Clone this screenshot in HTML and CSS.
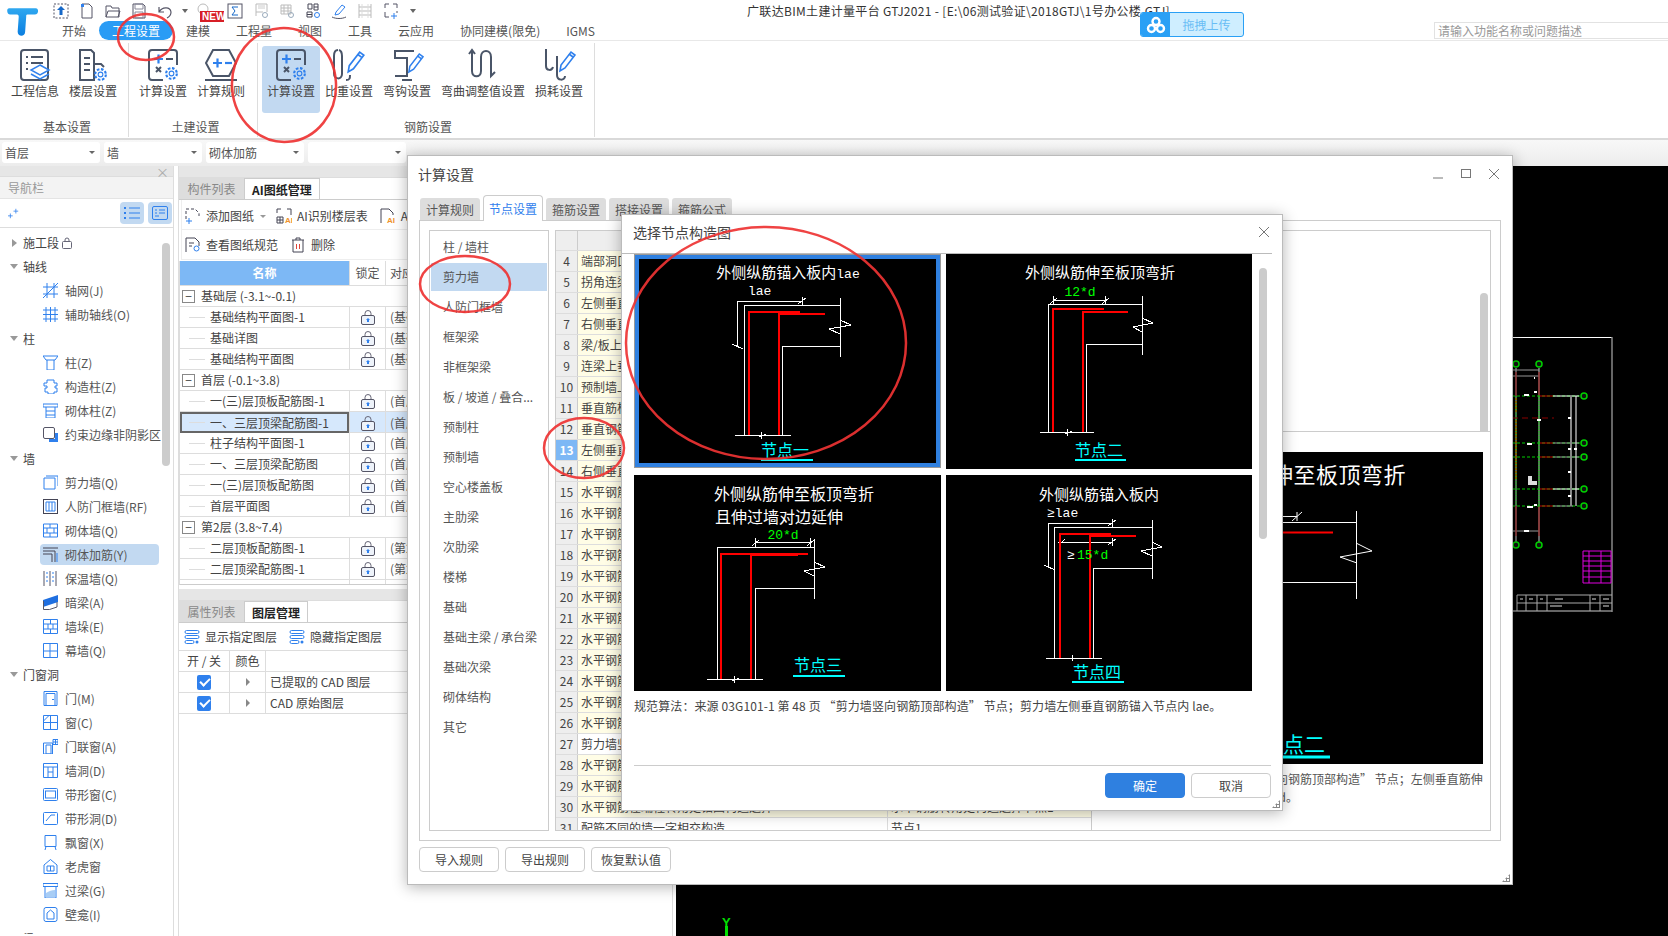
FILE: index.html
```html
<!DOCTYPE html>
<html lang="zh-CN">
<head>
    <meta charset="UTF-8">
    <title>广联达BIM土建计量平台 GTJ2021</title>
    <link rel="stylesheet" href="styles.css">
</head>
<body>
    <!-- shared icon pieces -->
    <svg class="defs" width="0" height="0">
        <symbol id="gear" viewBox="0 0 14 14"><circle cx="7" cy="7" r="2.2" fill="none" stroke="#2f80ed"/><circle cx="7" cy="7" r="5" fill="none" stroke="#2f80ed" stroke-width="2" stroke-dasharray="2.4 1.5"/></symbol>
        <symbol id="pencil" viewBox="0 0 18 24"><path d="M2 22l1-6L13 3l4 3L7 19z" fill="#fff" stroke="#2f80ed" stroke-width="1.6"/><path d="M11 5l4 3" stroke="#2f80ed" stroke-width="1.6"/></symbol>
        <symbol id="lock" viewBox="0 0 16 16"><path d="M5 7V4.500a3 3 0 0 1 6 0V7" fill="none" stroke="#667"/><rect x="1.500" y="6.500" width="13" height="9" rx="1.500" fill="#eef3fa" stroke="#556"/><path d="M8 9l2 2H9v2H7v-2H6z" fill="#2f80ed"/></symbol>
        <symbol id="layers" viewBox="0 0 16 16"><g fill="none" stroke="#2f80ed"><rect x="1" y="1.500" width="14" height="3" rx="1.500"/><rect x="1" y="6.500" width="14" height="3" rx="1.500"/><rect x="1" y="11.500" width="9" height="3" rx="1.500"/></g><circle cx="13" cy="13" r="1.500" fill="#2f80ed"/></symbol>
    </svg>

    <header class="top">
        <div class="top-row">
            <div class="quick">
                <svg class="logo" viewBox="0 0 30 28"><defs><linearGradient id="lg" x1="0" x2="0" y1="0" y2="1"><stop offset="0" stop-color="#2fa8f0"/><stop offset="1" stop-color="#0b7fe0"/></linearGradient></defs><path d="M2 2h25c3 0 3 6-1 6h-7c-1 0-1 1-1 2l-1 14c0 5-7 5-7 0l1-14c0-2-1-2-3-2H3C0 8-1 2 2 2z" fill="url(#lg)"/></svg>
                <svg class="qi" viewBox="0 0 16 16"><rect x="1" y="1" width="14" height="14" fill="none" stroke="#556" stroke-dasharray="2 1.500"/><path d="M8 3l4 4H9.500v5h-3V7H4z" fill="#1668c8"/></svg>
                <svg class="qi" viewBox="0 0 16 16"><path d="M3 1h7l3 3v11H3z" fill="none" stroke="#556"/><path d="M2 1h3v3H2z" fill="#2f80ed"/></svg>
                <svg class="qi" viewBox="0 0 16 16"><path d="M1 14V3h5l1 2h7v9z" fill="none" stroke="#556"/><path d="M1 14l2-6h12l-2 6" fill="none" stroke="#556"/></svg>
                <svg class="qi" viewBox="0 0 16 16"><path d="M2 1h10l2 2v12H2z" fill="none" stroke="#556"/><path d="M4 1h8v5H4zM4 9h8v6H4z" fill="none" stroke="#889"/></svg>
                <svg class="qi" viewBox="0 0 16 16"><path d="M2 4v5h5M2 9c3-5 11-6 12 0 0 3-2 5-4 6" fill="none" stroke="#556" stroke-width="1.200"/></svg>
                <span class="qcaret"></span>
                <span class="new-wrap"><svg class="qi ghost" viewBox="0 0 16 16"><circle cx="7" cy="6" r="5" fill="none" stroke="#bbb"/></svg><b class="new">NEW</b></span>
                <svg class="qi" viewBox="0 0 16 16"><rect x="1" y="1" width="14" height="14" fill="none" stroke="#556"/><path d="M11 4H5l3 4-3 4h6" fill="none" stroke="#1668c8"/></svg>
                <svg class="qi" viewBox="0 0 16 16"><path d="M3 9V1h11v8M3 13V9h7" fill="none" stroke="#bbb"/><path d="M5 3h7M5 5h7" stroke="#ccc"/><circle cx="12" cy="12" r="2.500" fill="none" stroke="#9ab"/></svg>
                <svg class="qi" viewBox="0 0 16 16"><path d="M2 2h10v9H2zM2 5h10M2 8h10M5 2v9M9 2v9" fill="none" stroke="#bbb"/><circle cx="12" cy="12" r="2.500" fill="none" stroke="#9ab"/></svg>
                <svg class="qi" viewBox="0 0 16 16"><path d="M3 1h4v5H3zM9 1h4v6H9zM9 4h4M2 9h5v5H2zM2 11.500h5" fill="none" stroke="#445"/><circle cx="12" cy="12" r="2.500" fill="none" stroke="#2f80ed"/></svg>
                <svg class="qi" viewBox="0 0 16 16"><path d="M1 14c4 2 10 2 14 0" fill="none" stroke="#556"/><path d="M4 12l1-3 6-7 3 2-6 7z" fill="none" stroke="#2f80ed"/></svg>
                <svg class="qi" viewBox="0 0 16 16"><path d="M2 1v14M14 1v14M2 4h12M2 8h12M2 12h12" fill="none" stroke="#bbb"/><path d="M5 1v14M11 1v14" stroke="#ddd"/></svg>
                <svg class="qi" viewBox="0 0 16 16"><path d="M2 5V1h4M10 1h4v4M14 8v2M2 9v5h4" fill="none" stroke="#556"/><path d="M11 10v6M8 13h6" stroke="#2f80ed" fill="none"/></svg>
                <span class="qmore"></span>
            </div>
            <div class="win-title">广联达BIM土建计量平台 GTJ2021 - [E:\06测试验证\2018GTJ\1号办公楼.GTJ]</div>
        </div>
        <nav class="tabs">
            <span class="tab">开始</span>
            <span class="tab on">工程设置</span>
            <span class="tab">建模</span>
            <span class="tab">工程量</span>
            <span class="tab">视图</span>
            <span class="tab">工具</span>
            <span class="tab">云应用</span>
            <span class="tab">协同建模(限免)</span>
            <span class="tab">IGMS</span>
            <div class="search">请输入功能名称或问题描述</div>
        </nav>
        <div class="upload">
            <span class="upload-ic"><svg viewBox="0 0 20 18" width="20" height="18"><g fill="none" stroke="#fff" stroke-width="2.400"><circle cx="10" cy="5.500" r="3.500"/><circle cx="5.500" cy="12.500" r="3.500"/><circle cx="14.500" cy="12.500" r="3.500"/></g></svg></span>
            <span class="upload-tx">拖拽上传</span>
        </div>
    </header>

    <section class="ribbon">
        <div class="rgroup g1">
            <div class="ritems">
                <div class="ritem"><svg class="ric" viewBox="0 0 34 34"><rect x="3" y="2" width="27" height="30" rx="3" fill="none" stroke="#4a5568" stroke-width="2"/><path d="M8 9h2M13 9h12M8 15h2M13 15h12M8 21h2" stroke="#4a5568" stroke-width="2"/><path d="M22 17l9 5-9 5-9-5z" fill="#fff" stroke="#2f80ed" stroke-width="1.500"/><path d="M13 26l9 5 9-5" fill="none" stroke="#2f80ed" stroke-width="1.500"/></svg><span>工程信息</span></div>
                <div class="ritem"><svg class="ric" viewBox="0 0 34 34"><path d="M4 32V2h11l3 3v27z" fill="none" stroke="#4a5568" stroke-width="2"/><path d="M8 10h6M8 16h6M8 22h6M18 16h7l3 3" fill="none" stroke="#4a5568" stroke-width="2"/><use href="#gear" x="17" y="19" width="15" height="15"/></svg><span>楼层设置</span></div>
            </div>
            <div class="rlabel">基本设置</div>
        </div>
        <div class="rgroup g2">
            <div class="ritems">
                <div class="ritem"><svg class="ric" viewBox="0 0 34 34"><rect x="3" y="2" width="28" height="30" rx="3" fill="none" stroke="#4a5568" stroke-width="2"/><path d="M8 11h9M12.500 6.500v9" stroke="#2f80ed" stroke-width="2.200"/><path d="M20 11h7" stroke="#4a5568" stroke-width="2"/><path d="M10 19l5 5M15 19l-5 5" stroke="#4a5568" stroke-width="2"/><rect x="17" y="17" width="17" height="17" fill="#fff"/><use href="#gear" x="18" y="18" width="15" height="15"/></svg><span>计算设置</span></div>
                <div class="ritem"><svg class="ric" viewBox="0 0 34 34"><path d="M9 2h16l7 13-7 13H9L2 15z" fill="none" stroke="#4a5568" stroke-width="2"/><path d="M9 15h9M13.500 10.500v9" stroke="#2f80ed" stroke-width="2.200"/><path d="M21 15h7" stroke="#2f80ed" stroke-width="2.200"/><path d="M1 32h32" stroke="#4a5568" stroke-width="2"/></svg><span>计算规则</span></div>
            </div>
            <div class="rlabel">土建设置</div>
        </div>
        <div class="rgroup g3">
            <div class="ritems">
                <div class="ritem active"><svg class="ric" viewBox="0 0 34 34"><rect x="3" y="2" width="28" height="30" rx="3" fill="none" stroke="#4a5568" stroke-width="2"/><path d="M8 11h9M12.500 6.500v9" stroke="#2f80ed" stroke-width="2.200"/><path d="M20 11h7" stroke="#4a5568" stroke-width="2"/><path d="M10 19l5 5M15 19l-5 5" stroke="#4a5568" stroke-width="2"/><rect x="17" y="17" width="17" height="17" fill="#c2d9f1"/><use href="#gear" x="18" y="18" width="15" height="15"/></svg><span>计算设置</span></div>
                <div class="ritem"><svg class="ric" viewBox="0 0 34 34"><path d="M6 2C2 2 2 6 2 8v17c0 7 8 7 8 1V8c0-2 0-5-3-6M14 32c4 0 4-2 4-5" fill="none" stroke="#4a5568" stroke-width="2"/><use href="#pencil" x="14" y="1" width="19" height="25"/></svg><span>比重设置</span></div>
                <div class="ritem"><svg class="ric" viewBox="0 0 34 34"><path d="M24 3H5v7h12v18H5M12 32h10" fill="none" stroke="#4a5568" stroke-width="2"/><use href="#pencil" x="17" y="3" width="17" height="23"/></svg><span>弯钩设置</span></div>
                <div class="ritem"><svg class="ric" viewBox="0 0 34 34"><path d="M3 6l3-4 3 4M6 2v21c0 7 9 7 9 0V9c0-8 10-8 10 0v19l4-4" fill="none" stroke="#4a5568" stroke-width="2"/></svg><span>弯曲调整值设置</span></div>
                <div class="ritem"><svg class="ric" viewBox="0 0 34 34"><path d="M4 1v17c0 5 6 5 7 1M15 8v19c0 6 8 6 8 1" fill="none" stroke="#4a5568" stroke-width="2"/><use href="#pencil" x="16" y="1" width="18" height="24"/></svg><span>损耗设置</span></div>
            </div>
            <div class="rlabel">钢筋设置</div>
        </div>
    </section>

    <section class="selbar">
        <div class="sel">首层</div>
        <div class="sel">墙</div>
        <div class="sel">砌体加筋</div>
        <div class="sel"></div>
    </section>

    <main class="main">
        <aside class="nav">
            <div class="band"><span class="band-x">×</span></div>
            <div class="nav-title">导航栏</div>
            <div class="nav-tools">
                <svg class="spark" viewBox="0 0 14 14"><path d="M3 7v6M0 10h6M10 1v6M7 4h6" stroke="#2f80ed" fill="none"/></svg>
                <span class="nav-btn"><svg viewBox="0 0 16 14" width="16" height="14"><path d="M5 2h11M5 7h11M5 12h11" stroke="#2f80ed"/><path d="M0 1h2v2H0zM0 6h2v2H0zM0 11h2v2H0z" fill="#2f80ed"/></svg></span>
                <span class="nav-btn"><svg viewBox="0 0 16 14" width="16" height="14"><rect x=".500" y=".500" width="15" height="13" rx="1.500" fill="none" stroke="#2f80ed"/><path d="M3 4h2M7 4h6M3 7h2M7 7h6M3 10h4" stroke="#2f80ed"/></svg></span>
            </div>
            <div class="tree">
                <div class="node grp closed">施工段 <svg class="mini" viewBox="0 0 10 12" width="10" height="12"><path d="M3 5V3a2 2 0 0 1 4 0v2" fill="none" stroke="#667"/><rect x=".500" y="4.500" width="9" height="7" rx="1" fill="none" stroke="#667"/></svg></div>
                <div class="node grp">轴线</div>
                <div class="node"><svg class="nic" viewBox="0 0 15 15"><path d="M4 0v15M11 0v15M0 4h15M0 11h15M0 15L15 0" stroke="#2f80ed" fill="none"/></svg>轴网(J)</div>
                <div class="node"><svg class="nic" viewBox="0 0 15 15"><path d="M3 0v15M7.500 0v15M12 0v15M0 3h15M0 7.500h15M0 12h15" stroke="#2f80ed" fill="none"/></svg>辅助轴线(O)</div>
                <div class="node grp">柱</div>
                <div class="node"><svg class="nic" viewBox="0 0 15 15"><path d="M0 1h15l-3 4H3zM4 5v10h7V5" stroke="#2f80ed" fill="none"/></svg>柱(Z)</div>
                <div class="node"><svg class="nic" viewBox="0 0 15 15"><path d="M4 1h7v3h3v3h-2v2h2v4h-3v2H5v-2H2V9h2V7H1V4h3z" stroke="#2f80ed" fill="none"/></svg>构造柱(Z)</div>
                <div class="node"><svg class="nic" viewBox="0 0 15 15"><path d="M0 1h15v3H0zM3 4v11h9V4M3 8h9M3 12h9" stroke="#2f80ed" fill="none"/></svg>砌体柱(Z)</div>
                <div class="node"><svg class="nic" viewBox="0 0 15 15"><rect x=".500" y=".500" width="11" height="11" rx="1.500" stroke="#556" fill="none"/><path d="M6 12h9v3H6zM12 6h3v6h-3z" fill="#2f80ed"/></svg>约束边缘非阴影区</div>
                <div class="node grp">墙</div>
                <div class="node"><svg class="nic" viewBox="0 0 15 15"><path d="M3 1h12v10M1 3h11v11H1z" stroke="#2f80ed" fill="none"/></svg>剪力墙(Q)</div>
                <div class="node"><svg class="nic" viewBox="0 0 15 15"><rect x=".500" y=".500" width="14" height="14" stroke="#445" fill="none"/><path d="M3 3h9v9H3zM6 3v9M9 3v9" stroke="#2f80ed" fill="none"/></svg>人防门框墙(RF)</div>
                <div class="node"><svg class="nic" viewBox="0 0 15 15"><path d="M.500 1h14v13H.500zM.500 5h14M.500 10h14M7 1v4M4 5v5M11 5v5M7 10v4" stroke="#2f80ed" fill="none"/></svg>砌体墙(Q)</div>
                <div class="node sel-node"><svg class="nic" viewBox="0 0 15 15"><path d="M0 1h15M0 4h12v11M0 7h9v8" stroke="#445" fill="none"/><path d="M14 6v9" stroke="#2f80ed"/></svg>砌体加筋(Y)</div>
                <div class="node"><svg class="nic" viewBox="0 0 15 15"><path d="M1 0v15M7 0v15M13 0v15" stroke="#556" fill="none"/><path d="M3 2h2M3 6h2M3 10h2M9 2h2M9 6h2M9 10h2" stroke="#2f80ed"/></svg>保温墙(Q)</div>
                <div class="node"><svg class="nic" viewBox="0 0 15 15"><path d="M0 5L15 0v7L0 12z" fill="#1f6fe0"/><path d="M.500 6v8.500h6L14 12V7" stroke="#556" fill="none"/></svg>暗梁(A)</div>
                <div class="node"><svg class="nic" viewBox="0 0 15 15"><path d="M.500.500h14v14H.500zM.500 5h14M.500 10h14M7.500.500V5M5 5v5M10 5v5M7.500 10v4.500" stroke="#2f80ed" fill="none"/></svg>墙垛(E)</div>
                <div class="node"><svg class="nic" viewBox="0 0 15 15"><path d="M.500.500h14v14H.500zM.500 8h14M7 .500V14.500" stroke="#2f80ed" fill="none"/></svg>幕墙(Q)</div>
                <div class="node grp">门窗洞</div>
                <div class="node"><svg class="nic" viewBox="0 0 15 15"><path d="M1 .500h13v14H1zM3 2.500h9v12H3z" stroke="#2f80ed" fill="none"/><path d="M9 8h2v1H9z" fill="#2f80ed"/></svg>门(M)</div>
                <div class="node"><svg class="nic" viewBox="0 0 15 15"><path d="M.500.500h14v14H.500zM7.500.500v14M.500 7.500h14M.500 6L6 .500" stroke="#2f80ed" fill="none"/></svg>窗(C)</div>
                <div class="node"><svg class="nic" viewBox="0 0 15 15"><path d="M.500 4h9v11h-9zM3 6h5v9H3zM10 .500h5v5h-5zM12.500 .500v5M10 3h5" stroke="#2f80ed" fill="none"/></svg>门联窗(A)</div>
                <div class="node"><svg class="nic" viewBox="0 0 15 15"><path d="M.500.500h14v14H.500zM.500 4h14M5 4v10.500M10 4v10.500M5 9h5" stroke="#2f80ed" fill="none"/></svg>墙洞(D)</div>
                <div class="node"><svg class="nic" viewBox="0 0 15 15"><rect x=".500" y="1.500" width="14" height="12" rx="1" stroke="#2f80ed" fill="none"/><rect x="2.500" y="4" width="10" height="7" stroke="#2f80ed" fill="none"/></svg>带形窗(C)</div>
                <div class="node"><svg class="nic" viewBox="0 0 15 15"><rect x=".500" y="1.500" width="14" height="12" rx="1" stroke="#2f80ed" fill="none"/><path d="M3 10l5-6h4" stroke="#2f80ed" fill="none"/></svg>带形洞(D)</div>
                <div class="node"><svg class="nic" viewBox="0 0 15 15"><path d="M2 .500h11v11H2zM3 11.500L2 15M12 11.500l1 3.500" stroke="#2f80ed" fill="none"/></svg>飘窗(X)</div>
                <div class="node"><svg class="nic" viewBox="0 0 15 15"><path d="M7.500 .500L14 6v8.500H1V6zM4 7h7v5H4zM7.500 7v5" stroke="#2f80ed" fill="none"/></svg>老虎窗</div>
                <div class="node"><svg class="nic" viewBox="0 0 15 15"><path d="M0 .500h15v3H0zM2 3.500V15h11V3.500" stroke="#2f80ed" fill="none"/><path d="M3 14V10c3-2 6-3 9-3v7z" fill="#a8cdf5"/></svg>过梁(G)</div>
                <div class="node"><svg class="nic" viewBox="0 0 15 15"><rect x="1" y=".500" width="13" height="14" rx="2" stroke="#2f80ed" fill="none"/><path d="M4 12V6l3.500-3L11 6v6z" stroke="#2f80ed" fill="none"/></svg>壁龛(I)</div>
                <div class="node grp">梁</div>
            </div>
        </aside>

        <div class="mid">
            <div class="band"></div>
            <div class="ptabs"><span class="ptab">构件列表</span><span class="ptab on">AI图纸管理</span></div>
            <div class="mbar upper">
                <svg class="bic" viewBox="0 0 16 16"><path d="M1 11V1h9l4 4v3" fill="none" stroke="#445" stroke-dasharray="3 2"/><path d="M4 10v6M1 13h6" stroke="#2f80ed"/></svg><span class="mtx">添加图纸</span><span class="mcaret"></span>
                <svg class="bic b2" viewBox="0 0 16 16"><path d="M1 5V1h4M1 9h6v6H1zM1 12h6M4 9v6M11 1h4v6" fill="none" stroke="#445"/><text x="9" y="15" class="ai-tx">AI</text></svg><span class="mtx">AI识别楼层表</span>
                <svg class="bic b3" viewBox="0 0 16 16"><path d="M1 15V1h8l4 4v2" fill="none" stroke="#445"/><text x="7" y="15" class="ai-tx">AI</text></svg><span class="mtx">AI</span>
            </div>
            <div class="mbar">
                <svg class="bic" viewBox="0 0 16 16"><path d="M1 15V1h9l4 4v4" fill="none" stroke="#445"/><path d="M4 6h5M4 9h3" stroke="#445"/><circle cx="11.500" cy="11.500" r="2.500" fill="none" stroke="#2f80ed"/></svg><span class="mtx">查看图纸规范</span>
                <svg class="bic b3" viewBox="0 0 14 16"><path d="M1 3h12M5 3V1h4v2M2 3v12h10V3" fill="none" stroke="#445"/><path d="M5.500 7v5M8.500 7v5" stroke="#e0463c"/></svg><span class="mtx">删除</span>
            </div>
            <div class="mtable">
                <div class="mrow head"><div class="mname">名称</div><div class="mcol">锁定</div><div class="mcol left">对应楼层</div></div>
                <div class="mrow grp"><span class="pm">−</span>基础层 (-3.1~-0.1)</div>
                <div class="mrow"><div class="mname-c">基础结构平面图-1</div><div class="mcol"><svg class="lk"><use href="#lock"/></svg></div><div class="mcol left">(基础层)</div></div>
                <div class="mrow"><div class="mname-c">基础详图</div><div class="mcol"><svg class="lk"><use href="#lock"/></svg></div><div class="mcol left">(基础层)</div></div>
                <div class="mrow"><div class="mname-c">基础结构平面图</div><div class="mcol"><svg class="lk"><use href="#lock"/></svg></div><div class="mcol left">(基础层)</div></div>
                <div class="mrow grp"><span class="pm">−</span>首层 (-0.1~3.8)</div>
                <div class="mrow"><div class="mname-c">一(三)层顶板配筋图-1</div><div class="mcol"><svg class="lk"><use href="#lock"/></svg></div><div class="mcol left">(首层)</div></div>
                <div class="mrow cur"><div class="mname-c focus">一、三层顶梁配筋图-1</div><div class="mcol"><svg class="lk"><use href="#lock"/></svg></div><div class="mcol left">(首层)</div></div>
                <div class="mrow"><div class="mname-c">柱子结构平面图-1</div><div class="mcol"><svg class="lk"><use href="#lock"/></svg></div><div class="mcol left">(首层)</div></div>
                <div class="mrow"><div class="mname-c">一、三层顶梁配筋图</div><div class="mcol"><svg class="lk"><use href="#lock"/></svg></div><div class="mcol left">(首层)</div></div>
                <div class="mrow"><div class="mname-c">一(三)层顶板配筋图</div><div class="mcol"><svg class="lk"><use href="#lock"/></svg></div><div class="mcol left">(首层)</div></div>
                <div class="mrow"><div class="mname-c">首层平面图</div><div class="mcol"><svg class="lk"><use href="#lock"/></svg></div><div class="mcol left">(首层)</div></div>
                <div class="mrow grp"><span class="pm">−</span>第2层 (3.8~7.4)</div>
                <div class="mrow"><div class="mname-c">二层顶板配筋图-1</div><div class="mcol"><svg class="lk"><use href="#lock"/></svg></div><div class="mcol left">(第2层)</div></div>
                <div class="mrow"><div class="mname-c">二层顶梁配筋图-1</div><div class="mcol"><svg class="lk"><use href="#lock"/></svg></div><div class="mcol left">(第2层)</div></div>
                <div class="mrow stub"><div class="mname-c"></div><div class="mcol"></div><div class="mcol left"></div></div>
            </div>
            <div class="band lower"></div>
            <div class="ptabs"><span class="ptab">属性列表</span><span class="ptab on">图层管理</span></div>
            <div class="lbar">
                <svg class="bic" viewBox="0 0 16 16"><use href="#layers"/></svg><span class="mtx">显示指定图层</span>
                <svg class="bic b4" viewBox="0 0 16 16"><use href="#layers"/></svg><span class="mtx">隐藏指定图层</span>
            </div>
            <div class="ltable">
                <div class="lrow"><div class="lc1">开 / 关</div><div class="lc2">颜色</div><div class="lc3"></div></div>
                <div class="lrow"><div class="lc1"><span class="chk"></span></div><div class="lc2"><span class="tri"></span></div><div class="lc3 tx">已提取的 CAD 图层</div></div>
                <div class="lrow"><div class="lc1"><span class="chk"></span></div><div class="lc2"><span class="tri"></span></div><div class="lc3 tx">CAD 原始图层</div></div>
            </div>
        </div>

        <div class="canvas">
            <svg class="cad" viewBox="1512 337 104 278" width="104" height="278">
                <path d="M1512 337.500h100" stroke="#fff" fill="none"/>
                <path d="M1612 337v275M1512 611h100" stroke="#888" stroke-width="1.500" fill="none"/>
                <path d="M1516 368v174M1539 368v174" stroke="#888" stroke-width="1.500"/>
                <path d="M1512 370h27M1512 376h27M1512 531h27" stroke="#999"/>
                <path d="M1516 396v110M1539 396v110" stroke="#00e000" stroke-dasharray="1.500 1"/>
                <path d="M1516 420v60M1516 398v14" stroke="#8a6a00" stroke-width="2" stroke-dasharray="2 1"/>
                <path d="M1516 372v24M1539 372v24M1516 506v30M1539 506v30" stroke="#a01010"/>
                <path d="M1512 418h42" stroke="#8c0000" stroke-dasharray="6 4"/>
                <path d="M1512 396h72M1512 443h72M1512 457h72M1512 489h72M1512 506h72" stroke="#00d000" stroke-dasharray="3 2"/>
                <path d="M1553 396h26M1553 489h26" stroke="#fff"/>
                <path d="M1553 443h26M1553 457h26M1553 506h20" stroke="#999"/>
                <path d="M1540 396h13M1540 443h13M1540 457h13M1540 489h13M1540 506h13" stroke="#c00000"/>
                <path d="M1571 396v110" stroke="#888" stroke-width="2"/>
                <path d="M1576 396v110" stroke="#fff"/>
                <path d="M1568 418h3M1568 449h3M1574 449h3M1568 472h3M1568 496h3" stroke="#fff" stroke-width="2" fill="none"/>
                <path d="M1534 392h3M1524 395h5M1537 420h4M1527 444h5M1527 507h6M1534 505h3M1524 531h5M1534 378h1" stroke="#fff" stroke-width="2" fill="none"/>
                <path d="M1528 476h4v5h5v4h-9z" fill="#ddd"/>
                <g fill="#111" stroke="#00d000" stroke-width="1.500">
                    <ellipse cx="1516" cy="364" rx="3" ry="3"/><ellipse cx="1539" cy="364" rx="3" ry="3"/><ellipse cx="1516" cy="545" rx="3" ry="3"/><ellipse cx="1539" cy="545" rx="3" ry="3"/>
                    <ellipse cx="1584" cy="396" rx="3" ry="3"/><ellipse cx="1584" cy="443" rx="3" ry="3"/><ellipse cx="1584" cy="457" rx="3" ry="3"/><ellipse cx="1584" cy="489" rx="3" ry="3"/><ellipse cx="1584" cy="506" rx="3" ry="3"/>
                </g>
                <path d="M1583 551h28v32h-28zM1583 556h28M1583 561h28M1583 566h28M1583 571h28M1583 577h28M1589 551v32M1601 551v32" stroke="#e000e0" fill="none"/>
                <path d="M1517 595h95M1517 603h95M1517 595v16M1526 595v16M1537 595v16M1547 595v16M1590 595v16M1600 595v16" stroke="#aaa" fill="none"/>
                <path d="M1520 599h3M1529 599h4M1540 599h3M1555 599h8M1592 599h4M1603 599h6M1550 606h12M1603 606h6" stroke="#ddd"/>
            </svg>
            <div class="yaxis"><span class="yy">Y</span></div>
        </div>
    </main>

    <!-- 计算设置 window -->
    <div class="dlg calc">
        <div class="dlg-head">
            <span class="dlg-title">计算设置</span>
            <span class="ctrls">
                <svg viewBox="0 0 12 12" width="12" height="12"><path d="M1 10h10" stroke="#777"/></svg>
                <svg viewBox="0 0 12 12" width="12" height="12"><rect x="1.500" y="1.500" width="9" height="8" fill="none" stroke="#777"/></svg>
                <svg viewBox="0 0 12 12" width="12" height="12"><path d="M1 1l10 10M11 1L1 11" stroke="#777"/></svg>
            </span>
        </div>
        <div class="dtabs">
            <span class="dtab">计算规则</span>
            <span class="dtab on">节点设置</span>
            <span class="dtab">箍筋设置</span>
            <span class="dtab">搭接设置</span>
            <span class="dtab">箍筋公式</span>
        </div>
        <div class="dpanel">
            <ul class="cats">
                <li>柱 / 墙柱</li>
                <li class="on">剪力墙</li>
                <li>人防门框墙</li>
                <li>框架梁</li>
                <li>非框架梁</li>
                <li>板 / 坡道 / 叠合...</li>
                <li>预制柱</li>
                <li>预制墙</li>
                <li>空心楼盖板</li>
                <li>主肋梁</li>
                <li>次肋梁</li>
                <li>楼梯</li>
                <li>基础</li>
                <li>基础主梁 / 承台梁</li>
                <li>基础次梁</li>
                <li>砌体结构</li>
                <li>其它</li>
            </ul>
            <div class="rules">
                <div class="rgrid">
                    <div class="rr head"><div class="no"></div><div class="nm"></div><div class="va"></div></div>
                    <div class="rr"><div class="no">4</div><div class="nm">端部洞口连梁纵筋锚固构造</div><div class="va">节点1</div></div>
                    <div class="rr"><div class="no">5</div><div class="nm">拐角连梁纵筋构造</div><div class="va">节点1</div></div>
                    <div class="rr"><div class="no">6</div><div class="nm">左侧垂直钢筋顶部构造</div><div class="va">节点1</div></div>
                    <div class="rr"><div class="no">7</div><div class="nm">右侧垂直钢筋顶部构造</div><div class="va">节点1</div></div>
                    <div class="rr"><div class="no">8</div><div class="nm">梁/板上墙垂直筋构造</div><div class="va">节点1</div></div>
                    <div class="rr"><div class="no">9</div><div class="nm">连梁上垂直筋构造</div><div class="va">节点1</div></div>
                    <div class="rr"><div class="no">10</div><div class="nm">预制墙上垂直筋构造</div><div class="va">节点1</div></div>
                    <div class="rr"><div class="no">11</div><div class="nm">垂直筋构造</div><div class="va">节点1</div></div>
                    <div class="rr"><div class="no">12</div><div class="nm">垂直钢筋构造</div><div class="va">节点1</div></div>
                    <div class="rr sel-r"><div class="no">13</div><div class="nm">左侧垂直钢筋构造</div><div class="va">节点1</div></div>
                    <div class="rr"><div class="no">14</div><div class="nm">右侧垂直钢筋构造</div><div class="va">节点1</div></div>
                    <div class="rr"><div class="no">15</div><div class="nm">水平钢筋构造</div><div class="va">节点1</div></div>
                    <div class="rr"><div class="no">16</div><div class="nm">水平钢筋构造</div><div class="va">节点1</div></div>
                    <div class="rr"><div class="no">17</div><div class="nm">水平钢筋构造</div><div class="va">节点1</div></div>
                    <div class="rr"><div class="no">18</div><div class="nm">水平钢筋构造</div><div class="va">节点1</div></div>
                    <div class="rr"><div class="no">19</div><div class="nm">水平钢筋构造</div><div class="va">节点1</div></div>
                    <div class="rr"><div class="no">20</div><div class="nm">水平钢筋构造</div><div class="va">节点1</div></div>
                    <div class="rr"><div class="no">21</div><div class="nm">水平钢筋构造</div><div class="va">节点1</div></div>
                    <div class="rr"><div class="no">22</div><div class="nm">水平钢筋构造</div><div class="va">节点1</div></div>
                    <div class="rr"><div class="no">23</div><div class="nm">水平钢筋构造</div><div class="va">节点1</div></div>
                    <div class="rr"><div class="no">24</div><div class="nm">水平钢筋构造</div><div class="va">节点1</div></div>
                    <div class="rr"><div class="no">25</div><div class="nm">水平钢筋构造</div><div class="va">节点1</div></div>
                    <div class="rr"><div class="no">26</div><div class="nm">水平钢筋构造</div><div class="va">节点1</div></div>
                    <div class="rr plain"><div class="no">27</div><div class="nm">剪力墙竖向钢筋构造</div><div class="va">节点1</div></div>
                    <div class="rr"><div class="no">28</div><div class="nm">水平钢筋构造</div><div class="va">节点1</div></div>
                    <div class="rr"><div class="no">29</div><div class="nm">水平钢筋构造</div><div class="va">节点1</div></div>
                    <div class="rr"><div class="no">30</div><div class="nm">水平钢筋在端柱转角处锚固构造选择</div><div class="va">水平钢筋转角处构造选择节点1</div></div>
                    <div class="rr plain"><div class="no">31</div><div class="nm">配筋不同的墙一字相交构造</div><div class="va">节点1</div></div>
                </div>
                <div class="preview">
                    <div class="pv-top"><span class="pv-scroll"></span></div>
                    <div class="pv-bottom">
                        <svg class="pv-img" viewBox="0 0 383 312" width="383" height="312">
                            <text x="306" y="31" class="big-t" text-anchor="end">外侧纵筋伸至板顶弯折</text>
                            <path d="M30 64.500h167M197 60v9M30 70.500h226M30 130.500h226M256.500 59v88" stroke="#fff" fill="none"/>
                            <path d="M192 69l10-9" stroke="#fff"/>
                            <path d="M30 80.500h203" stroke="#f00" stroke-width="2"/>
                            <path d="M30 80h152" stroke="#f00" stroke-width="3"/>
                            <path d="M256 91l16 8-32 6 17 6" stroke="#fff" fill="none"/>
                            <text x="162" y="300" class="lbl-big">节点二</text>
                            <path d="M30 305h200" stroke="#0ff" stroke-width="3"/>
                        </svg>
                        <p class="pv-text">规范算法：03G101-1 “剪力墙竖向钢筋顶部构造” 节点；左侧垂直筋伸<br>至板顶弯折，弯折长度不小于 12*d。</p>
                    </div>
                </div>
            </div>
        </div>
        <div class="dfoot">
            <button class="btn">导入规则</button>
            <button class="btn">导出规则</button>
            <button class="btn">恢复默认值</button>
        </div>
        <span class="grip"></span>
    </div>

    <!-- 选择节点构造图 window -->
    <div class="dlg pick">
        <div class="pick-head"><span class="dlg-title">选择节点构造图</span>
            <svg viewBox="0 0 12 12" width="12" height="12"><path d="M1 1l10 10M11 1L1 11" stroke="#777"/></svg>
        </div>
        <div class="pick-body">
            <div class="nodes">
                <div class="ncell first">
                    <svg viewBox="0 0 307 214" width="307" height="214">
                        <text x="154" y="24" class="t15" text-anchor="middle">外侧纵筋锚入板内<tspan class="m13">lae</tspan></text>
                        <text x="114" y="41" class="t15 m13">lae</text>
                        <path d="M103.500 92V47.500H168M110.500 181V51.500H206.500M148.500 181V92.500H206.500M206.500 44v59M101 181.500h56M206 66l11 5-22 4 11 5" class="wl"/>
                        <path d="M98 90l11 5M168 43v8M164 50l8-6M127 178v7M125 183l7-3" class="wl"/>
                        <path d="M114.500 181V58H166M144.500 181V59.500H191" class="rd"/>
                        <text x="127" y="202" class="lbl">节点一</text>
                        <path d="M127 205.500h52" class="cy"/>
                    </svg>
                </div>
                <div class="ncell">
                    <svg viewBox="0 0 306 215" width="306" height="215">
                        <text x="154" y="24" class="t15" text-anchor="middle">外侧纵筋伸至板顶弯折</text>
                        <text x="134" y="42" class="t15 m13 gr" text-anchor="middle">12*d</text>
                        <path d="M107 46.500h52M107 42v9M159 42v9M104 50l7-6M156 50l7-6M102.500 178V50.500H196.500M140.500 178V90.500H196.500M196.500 42v59M94 178.500h54M196 64l11 5-20 4 9 5M121 175v7M119 180l7-3" class="wl"/>
                        <path d="M106.500 178V55H158M136.500 178V57.500H182" class="rd"/>
                        <text x="129" y="202" class="lbl">节点二</text>
                        <path d="M129 206h51" class="cy"/>
                    </svg>
                </div>
                <div class="ncell">
                    <svg viewBox="0 0 307 216" width="307" height="216">
                        <text x="160" y="25" class="t16" text-anchor="middle">外侧纵筋伸至板顶弯折</text>
                        <text x="81" y="48" class="t16">且伸过墙对边延伸</text>
                        <text x="149" y="64" class="t15 m13 gr" text-anchor="middle">20*d</text>
                        <path d="M121 67.500h55M121 63v9M176 63v9M118 71l7-6M173 71l7-6M83.500 204V72.500H180.500M121.500 204V113.500H180.500M180.500 64v60M73 204.500h56M180 87l11 5-21 4 10 5M100 201v7M98 206l7-3" class="wl"/>
                        <path d="M86.500 204V78.500H174M116.500 204V79.500H164" class="rd"/>
                        <text x="160" y="196" class="lbl">节点三</text>
                        <path d="M159 201h52" class="cy"/>
                    </svg>
                </div>
                <div class="ncell">
                    <svg viewBox="0 0 306 216" width="306" height="216">
                        <text x="153" y="25" class="t15" text-anchor="middle">外侧纵筋锚入板内</text>
                        <text x="101" y="42" class="t15 m13">≥lae</text>
                        <path d="M102.500 93V48.500H166M108.500 183V52.500H206.500M147.500 183V93.500H206.500M206.500 45v59M100 183.500h56M206 67l10 5-21 4 11 5M98 90l11 5M166 44v8M162 51l8-6M112 67.500h54M166 63v8M162 70l8-6M113 70l6-6M126 180v6" class="wl"/>
                        <path d="M113.500 183V59H165M143.500 183V60.500H190" class="rd"/>
                        <text x="121" y="84" class="t15 m13">≥</text>
                        <text x="131" y="84" class="t15 m13 gr">15*d</text>
                        <text x="127" y="203" class="lbl">节点四</text>
                        <path d="M126 207h52" class="cy"/>
                    </svg>
                </div>
            </div>
            <span class="pick-scroll"></span>
        </div>
        <p class="pick-text">规范算法：来源 03G101-1 第 48 页 “剪力墙竖向钢筋顶部构造” 节点；剪力墙左侧垂直钢筋锚入节点内 lae。</p>
        <div class="pick-foot">
            <button class="btn primary">确定</button>
            <button class="btn">取消</button>
        </div>
        <span class="grip"></span>
    </div>

    <!-- hand drawn red marks on top of the screenshot -->
    <svg class="marks" viewBox="0 0 1668 936" width="1668" height="936">
        <ellipse cx="146" cy="37" rx="28" ry="23"/>
        <ellipse cx="284" cy="85" rx="52" ry="57" transform="rotate(-4 284 85)"/>
        <ellipse cx="465" cy="284" rx="45" ry="28"/>
        <ellipse cx="584" cy="448" rx="40" ry="30"/>
        <ellipse cx="766" cy="343" rx="140" ry="116"/>
    </svg>
</body>
</html>
```

FILE: styles.css
```css
* {
    margin: 0;
    padding: 0;
    box-sizing: border-box;
}

html, body {
    width: 1668px;
    height: 936px;
    overflow: hidden;
}

body {
    background: #fff;
    color: #444;
    font-family: "Noto Sans CJK SC", "Noto Sans", sans-serif;
    font-size: 12px;
    line-height: 1;
    position: relative;
}

.defs {
    position: absolute;
}

/* title area */
.top {
    height: 41px;
    border-bottom: 1px solid #e8e8e8;
    position: relative;
}

.top-row {
    height: 21px;
    display: flex;
    align-items: center;
}

.quick {
    width: 747px;
    display: flex;
    align-items: center;
    padding-left: 53px;
    position: relative;
}

.logo {
    position: absolute;
    left: 7px;
    top: 3px;
    width: 32px;
    height: 30px;
}

.qi {
    width: 16px;
    height: 16px;
    margin-right: 10px;
    flex: none;
}

.qcaret, .qmore {
    width: 0;
    height: 0;
    border-left: 3px solid transparent;
    border-right: 3px solid transparent;
    border-top: 4px solid #666;
    margin-right: 11px;
    margin-left: -1px;
}

.qmore {
    margin-left: 1px;
}

.new-wrap {
    width: 28px;
    position: relative;
    display: flex;
}

.ghost {
    margin-left: -3px;
}

.new {
    position: absolute;
    left: 1px;
    top: 8px;
    background: #d71f26;
    color: #fff;
    font: 700 10px "Liberation Sans", sans-serif;
    padding: 0 2px;
    line-height: 11px;
    width: 24px;
}

.win-title {
    color: #333;
    white-space: nowrap;
    letter-spacing: .32px;
}

.tabs {
    height: 19px;
    display: flex;
    align-items: center;
    padding-left: 49px;
    position: relative;
}

.tab {
    padding: 0 13px;
    height: 19px;
    line-height: 19px;
    color: #555;
    white-space: nowrap;
}

.tab.on {
    background: #2a9cf5;
    color: #fff;
    border-radius: 10px;
}

.search {
    position: absolute;
    left: 1434px;
    right: 0;
    top: 1px;
    height: 17px;
    line-height: 16px;
    border: 1px solid #e2e2e2;
    border-right: 0;
    padding-left: 3px;
    color: #999;
}

.upload {
    position: absolute;
    left: 1140px;
    top: 12px;
    width: 104px;
    height: 25px;
    display: flex;
    border: 1px solid #2aa0f5;
    border-radius: 3px;
    overflow: hidden;
    background: #cfeeff;
}

.upload-ic {
    width: 29px;
    background: #2aa0f5;
    display: flex;
    align-items: center;
    justify-content: center;
}

.upload-tx {
    flex: 1;
    text-align: center;
    line-height: 23px;
    color: #69bdf5;
}

/* ribbon */
.ribbon {
    height: 99px;
    display: flex;
    border-bottom: 2px solid #d9d9d9;
}

.rgroup {
    display: flex;
    flex-direction: column;
    height: 94px;
    margin-top: 2px;
    border-right: 1px solid #ddd;
}

.g1 {
    width: 129px;
    padding-left: 6px;
}

.g2 {
    width: 129px;
    padding-left: 5px;
}

.g3 {
    width: 337px;
    padding-left: 4px;
}

.ritems {
    display: flex;
    flex: 1;
    padding-top: 3px;
}

.ritem {
    height: 67px;
    padding: 0 5px;
    display: flex;
    flex-direction: column;
    align-items: center;
    border-radius: 3px;
    white-space: nowrap;
}

.ritem span {
    margin-top: 3px;
}

.ritem.active {
    background: #c2d9f1;
}

.ric {
    width: 34px;
    height: 34px;
    margin-top: 2px;
}

.rlabel {
    text-align: center;
    height: 20px;
    line-height: 20px;
    color: #555;
}

/* selector bar */
.selbar {
    height: 26px;
    display: flex;
    gap: 4px;
    padding: 2px 2px 3px;
    background: linear-gradient(#f8f8f8, #ececec);
}

.sel {
    width: 98px;
    height: 21px;
    line-height: 21px;
    background: #fff;
    border-radius: 3px;
    padding-left: 3px;
    position: relative;
    color: #555;
}

.sel::after {
    content: "";
    position: absolute;
    right: 5px;
    top: 9px;
    border-left: 3px solid transparent;
    border-right: 3px solid transparent;
    border-top: 3px solid #666;
}

/* body of the app */
.main {
    height: 770px;
    display: flex;
}

.band {
    height: 12px;
    background: #e6e6e6;
    border-bottom: 1px solid #ddd;
    position: relative;
}

.nav .band {
    height: 11px;
}

.band-x {
    position: absolute;
    right: 4px;
    top: -1px;
    color: #aaa;
    font-size: 13px;
}

.nav {
    width: 174px;
    flex: none;
    border-right: 1px solid #ddd;
    margin-right: 4px;
}

.nav-title {
    height: 22px;
    line-height: 22px;
    padding-left: 8px;
    background: #f3f3f3;
    color: #999;
    border-bottom: 1px solid #e4e4e4;
}

.nav-tools {
    height: 29px;
    display: flex;
    align-items: center;
    gap: 4px;
    padding-left: 8px;
    border-bottom: 1px solid #ddd;
}

.spark {
    width: 11px;
    height: 11px;
    margin-right: 97px;
}

.nav-btn {
    width: 24px;
    height: 22px;
    background: #c2d9f1;
    border-radius: 4px;
    display: flex;
    align-items: center;
    justify-content: center;
}

.tree {
    height: 706px;
    overflow: hidden;
    position: relative;
    padding-top: 3px;
}

.tree::after {
    content: "";
    position: absolute;
    left: 162px;
    top: 15px;
    width: 8px;
    height: 223px;
    border-radius: 4px;
    background: #ccc;
}

.node {
    height: 24px;
    display: flex;
    align-items: center;
    padding-left: 65px;
    white-space: nowrap;
    position: relative;
    width: 159px;
    color: #555;
}

.node .nic {
    position: absolute;
    left: 43px;
    top: 4px;
    width: 15px;
    height: 15px;
}

.node.grp {
    padding-left: 23px;
    color: #444;
}

.node.grp::before {
    content: "";
    position: absolute;
    left: 10px;
    top: 9px;
    border-left: 4px solid transparent;
    border-right: 4px solid transparent;
    border-top: 5px solid #999;
}

.node.closed::before {
    left: 12px;
    top: 8px;
    border-top: 4px solid transparent;
    border-bottom: 4px solid transparent;
    border-left: 5px solid #999;
    border-right: 0;
}

.mini {
    margin-left: 3px;
}

.sel-node {
    background: #c2d9f1;
    border-radius: 4px;
    margin-left: 40px;
    width: 119px;
    padding-left: 25px;
    height: 21px;
    margin-top: 1px;
    margin-bottom: 2px;
}

.sel-node .nic {
    left: 3px;
    top: 3px;
}

.mid {
    width: 498px;
    flex: none;
    border-left: 1px solid #ddd;
    position: relative;
}

.mid::after {
    content: "";
    position: absolute;
    right: 3px;
    top: 0;
    bottom: 0;
    width: 1px;
    background: #ddd;
}

.ptabs {
    height: 22px;
    display: flex;
    border-bottom: 1px solid #ccc;
}

.ptab {
    width: 65px;
    background: #ddd;
    text-align: center;
    line-height: 22px;
    color: #888;
}

.ptab.on {
    width: auto;
    padding: 0 7px;
    background: #fff;
    color: #222;
    font-weight: 700;
    border: 1px solid #ccc;
    border-bottom: 0;
}

.mbar {
    height: 30px;
    display: flex;
    align-items: center;
    padding-left: 3px;
    margin-left: 2px;
    border-left: 1px solid #eee;
    border-bottom: 1px solid #eee;
}

.mbar.upper {
    padding-top: 3px;
}

.bic {
    width: 16px;
    height: 16px;
    flex: none;
}

.mtx {
    margin-left: 5px;
    white-space: nowrap;
}

.mcaret {
    margin-left: 6px;
    border-left: 3px solid transparent;
    border-right: 3px solid transparent;
    border-top: 3px solid #999;
}

.b2 {
    margin-left: 10px;
}

.b3, .b4 {
    margin-left: 12px;
}

.ai-tx {
    font: 700 8px "Liberation Sans", sans-serif;
    fill: #f0932b;
}

.mtable {
    margin-top: 1px;
    height: 324px;
    overflow: hidden;
    border-bottom: 1px solid #ccc;
    border-left: 1px solid #ddd;
}

.mrow {
    height: 21px;
    display: grid;
    grid-template-columns: 169px 36px 1fr;
    border-bottom: 1px solid #ddd;
    align-items: center;
    color: #444;
}

.mrow.head {
    height: 25px;
}

.mname {
    background: #7db8f5;
    color: #fff;
    font-weight: 700;
    text-align: center;
    height: 24px;
    line-height: 24px;
}

.mcol {
    height: 100%;
    border-left: 1px solid #ddd;
    display: flex;
    align-items: center;
    justify-content: center;
    color: #555;
}

.mcol.left {
    justify-content: flex-start;
    padding-left: 4px;
}

.mname-c {
    height: 100%;
    padding-left: 30px;
    line-height: 20px;
    position: relative;
    white-space: nowrap;
}

.mname-c::before {
    content: "";
    position: absolute;
    left: 9px;
    top: 10px;
    width: 16px;
    border-top: 1px solid #ddd;
}

.cur {
    background: #d6e8fc;
}

.focus {
    border: 2px solid #666;
    padding-left: 28px;
    line-height: 17px;
}

.focus::before {
    left: 7px;
    top: 8px;
}

.mrow.grp {
    display: flex;
    padding-left: 21px;
    position: relative;
}

.pm {
    position: absolute;
    left: 2px;
    top: 4px;
    width: 13px;
    height: 13px;
    border: 1px solid #888;
    line-height: 10px;
    text-align: center;
    color: #444;
}

.lk {
    width: 16px;
    height: 16px;
}

.stub {
    height: 10px;
}

.band.lower {
    margin-top: 4px;
}

.lbar {
    height: 28px;
    display: flex;
    align-items: center;
    padding-left: 5px;
    border-bottom: 1px solid #ddd;
}

.lrow {
    height: 21px;
    display: grid;
    grid-template-columns: 51px 36px 1fr;
    border-bottom: 1px solid #ddd;
    align-items: center;
}

.lc1, .lc2 {
    height: 100%;
    display: flex;
    align-items: center;
    justify-content: center;
    border-right: 1px solid #ddd;
}

.lc3.tx {
    padding-left: 4px;
}

.chk {
    width: 14px;
    height: 15px;
    background: #2f80ed;
    border-radius: 2px;
    position: relative;
}

.chk::after {
    content: "";
    position: absolute;
    left: 3px;
    top: 3px;
    width: 8px;
    height: 4px;
    border-left: 2px solid #fff;
    border-bottom: 2px solid #fff;
    transform: rotate(-45deg);
}

.tri {
    border-top: 4px solid transparent;
    border-bottom: 4px solid transparent;
    border-left: 4px solid #888;
}

.canvas {
    flex: 1;
    background: #000;
    position: relative;
}

/* cad drawing is a free canvas */
.cad {
    position: absolute;
    left: 836px;
    top: 171px;
}

.yaxis {
    position: absolute;
    left: 50px;
    top: 761px;
    width: 1px;
    height: 9px;
    background: #00e000;
    box-shadow: 0 0 0 1px #00e000;
}

.yy {
    position: absolute;
    left: -4px;
    top: -12px;
    color: #00e000;
    font: 700 13px "Liberation Sans", sans-serif;
}

/* windows */
.dlg {
    position: absolute;
    background: #fff;
    border: 1px solid #bbb;
    box-shadow: 0 2px 14px rgba(0, 0, 0, .3);
}

.calc {
    left: 407px;
    top: 155px;
    width: 1106px;
    height: 730px;
    z-index: 1;
}

.dlg-head {
    height: 39px;
    display: flex;
    justify-content: space-between;
    align-items: center;
    padding: 0 12px 3px 10px;
}

.dlg-title {
    font-size: 14px;
    color: #444;
}

.ctrls {
    display: flex;
    gap: 16px;
}

.dtabs {
    height: 25px;
    padding-left: 12px;
    display: flex;
    align-items: flex-end;
    gap: 3px;
    position: relative;
    z-index: 1;
}

.dtab {
    width: 60px;
    height: 22px;
    line-height: 23px;
    text-align: center;
    background: #ddd;
    border-radius: 3px 3px 0 0;
    color: #555;
}

.dtab.on {
    height: 26px;
    margin: 0 0 -1px;
    line-height: 26px;
    background: #fff;
    color: #2f80ed;
    border: 1px solid #ccc;
    border-bottom: 0;
    border-radius: 4px 4px 0 0;
}

.dpanel {
    margin: 0 11px;
    height: 621px;
    border: 1px solid #ccc;
    padding: 9px;
    display: flex;
    gap: 6px;
}

.cats {
    list-style: none;
    width: 120px;
    flex: none;
    border: 1px solid #ccc;
    padding: 1px;
    color: #555;
}

.cats li {
    height: 30px;
    line-height: 30px;
    padding-left: 12px;
    white-space: nowrap;
}

.cats li.on {
    background: #c2d9f1;
    height: 28px;
    line-height: 28px;
    margin: 1px 0;
}

.rules {
    flex: 1;
    display: flex;
    border: 1px solid #ccc;
    overflow: hidden;
}

.rgrid {
    width: 536px;
    flex: none;
    border-right: 1px solid #ccc;
}

.rr {
    height: 21px;
    display: grid;
    grid-template-columns: 22px 310px 1fr;
    background: #fffde6;
    border-bottom: 1px solid #ddd;
}

.rr.head {
    height: 20px;
    background: #eee;
}

.rr.plain {
    background: #fff;
}

.no {
    background: #eee;
    border-right: 1px solid #ccc;
    text-align: center;
    line-height: 20px;
}

.nm {
    padding-left: 3px;
    line-height: 20px;
    white-space: nowrap;
    overflow: hidden;
    border-right: 1px solid #ddd;
}

.va {
    padding-left: 3px;
    line-height: 20px;
    white-space: nowrap;
    overflow: hidden;
}

.sel-r .no {
    background: #7db8f5;
    color: #fff;
    font-weight: 700;
}

.preview {
    flex: 1;
    min-width: 0;
    display: flex;
    flex-direction: column;
}

.pv-top {
    height: 201px;
    flex: none;
    border-bottom: 1px solid #ccc;
    display: flex;
    justify-content: flex-end;
    align-items: flex-end;
    padding-right: 2px;
}

.pv-scroll {
    width: 8px;
    height: 138px;
    background: #ccc;
    border-radius: 4px 4px 0 0;
}

.pv-bottom {
    padding: 20px 0 0 8px;
}

.pv-img {
    display: block;
    background: #000;
}

.big-t {
    font-size: 22px;
    fill: #fff;
    letter-spacing: .5px;
}

.lbl-big {
    font-size: 21px;
    fill: #0ff;
}

.pv-text {
    margin-top: 6px;
    padding-left: 1px;
    line-height: 18px;
    white-space: nowrap;
    color: #555;
}

.dfoot {
    padding: 6px 0 0 11px;
    display: flex;
    gap: 6px;
}

.btn {
    width: 80px;
    height: 25px;
    background: #fff;
    border: 1px solid #ccc;
    border-radius: 4px;
    font: 12px "Noto Sans CJK SC", sans-serif;
    color: #444;
}

.btn.primary {
    background: #2f80e0;
    border-color: #2f80e0;
    color: #fff;
}

.grip {
    position: absolute;
    right: 2px;
    bottom: 2px;
    width: 8px;
    height: 8px;
    background: radial-gradient(#888 1px, transparent 1.2px) 0 0 / 3px 3px;
    clip-path: polygon(100% 0, 100% 100%, 0 100%);
}

.pick {
    left: 621px;
    top: 214px;
    width: 662px;
    height: 597px;
    z-index: 2;
}

.pick-head {
    height: 39px;
    display: flex;
    justify-content: space-between;
    align-items: center;
    padding: 0 12px 4px 11px;
    border-bottom: 1px solid #bbb;
    margin-right: 10px;
}

.pick-head svg {
    margin-right: -10px;
}

.pick-body {
    height: 437px;
    padding-left: 12px;
    display: flex;
}

.nodes {
    width: 619px;
    display: grid;
    grid-template-columns: 307px 306px;
    grid-template-rows: 215px 216px;
    column-gap: 5px;
    row-gap: 6px;
}

.ncell {
    background: #000;
    overflow: hidden;
}

.ncell svg {
    display: block;
    shape-rendering: crispEdges;
}

.ncell text {
    shape-rendering: auto;
}

.ncell.first {
    height: 214px;
    box-shadow: inset 0 0 0 1px #999, inset 0 0 0 5px #2f80e0;
}

.t15, .t16 {
    font-size: 15px;
    fill: #fff;
}

.t15 {
    font-family: "Liberation Mono", "Noto Sans CJK SC", monospace;
}

.t16 {
    font-size: 16px;
}

.m13 {
    font-size: 13px;
}

.gr {
    fill: #00ff00;
}

.lbl {
    font-size: 16px;
    fill: #0ff;
}

.wl {
    stroke: #fff;
    fill: none;
    stroke-width: 1;
}

.rd {
    stroke: #f00;
    fill: none;
    stroke-width: 2;
}

.cy {
    stroke: #0ff;
    fill: none;
    stroke-width: 2;
}

.pick-scroll {
    width: 8px;
    height: 271px;
    margin: 14px 0 0 6px;
    background: #ccc;
    border-radius: 4px;
}

.pick-text {
    padding: 9px 0 0 12px;
    height: 74px;
    color: #444;
    white-space: nowrap;
    letter-spacing: .1px;
}

.pick-foot {
    margin: 0 11px 0 12px;
    border-top: 1px solid #ccc;
    padding-top: 7px;
    display: flex;
    justify-content: flex-end;
    gap: 6px;
}

/* red annotation rings */
.marks {
    position: absolute;
    left: 0;
    top: 0;
    z-index: 3;
    pointer-events: none;
}

.marks ellipse {
    fill: none;
    stroke: #ee3333;
    stroke-width: 2.5;
    opacity: .92;
}
```
